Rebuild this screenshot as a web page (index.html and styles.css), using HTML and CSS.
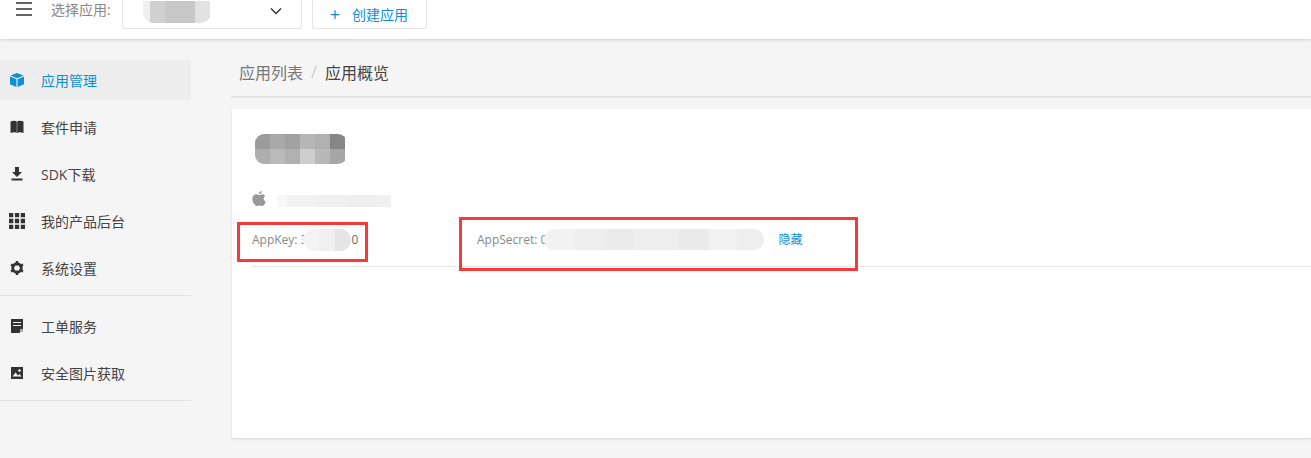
FILE: index.html
```html
<!DOCTYPE html>
<html>
<head>
    <meta charset="utf-8">
    <link rel="stylesheet" href="styles.css">
</head>
<body>
    <div id="topBar">
        <svg class="menuIcon" width="18" height="16" viewBox="0 0 18 16"><path d="M1 2h16M1 8h16M1 14h16" stroke="#333" stroke-width="1.4" fill="none"/></svg>
        <span class="selectLabel">选择应用:</span>
        <div class="appSelect">
            <div class="blur selectBlur">
                <i style="width:7px;background:#f0f0f0"></i><i style="width:15px;background:#d0d0d0"></i><i style="width:30px;background:#c8c8c8"></i><i style="width:15px;background:#e2e2e2"></i>
            </div>
            <svg class="chevron" width="12" height="8" viewBox="0 0 12 8"><path d="M1 1.5l5 5 5-5" stroke="#333" stroke-width="1.4" fill="none"/></svg>
        </div>
        <div class="createBtn"><span class="plus">+</span><span>创建应用</span></div>
    </div>

    <div id="page">
        <div id="sideNav">
            <div class="navItem active">
                <svg class="navIcon" viewBox="0 0 14 14"><path d="M7 0l6.5 2.6L7 5.2.5 2.6zM0 3.6l6.4 2.6V14L0 11.2zM14 3.6L7.6 6.2V14l6.4-2.8z" fill="#0b8fd6"/></svg>
                <span>应用管理</span>
            </div>
            <div class="navItem">
                <svg class="navIcon" viewBox="0 0 14 14"><path d="M0.500 1.500C3 .5 5.800.5 6.800 1.500V13C5.800 12 3 12 .5 13zM13.500 1.500C11 .5 8.200.5 7.200 1.500V13C8.200 12 11 12 13.500 13z" fill="#333"/></svg>
                <span>套件申请</span>
            </div>
            <div class="navItem">
                <svg class="navIcon" viewBox="0 0 14 14"><path d="M5 0h4v5h3L7 10 2 5h3zM1.500 11.500h11v2h-11z" fill="#333"/></svg>
                <span>SDK下载</span>
            </div>
            <div class="navItem">
                <svg class="navIcon gridIcon" viewBox="0 0 15 15"><path d="M0 0h4v4H0zM5.500 0h4v4h-4zM11 0h4v4h-4zM0 5.500h4v4H0zM5.500 5.500h4v4h-4zM11 5.500h4v4h-4zM0 11h4v4H0zM5.500 11h4v4h-4zM11 11h4v4h-4z" fill="#333"/></svg>
                <span>我的产品后台</span>
            </div>
            <div class="navItem">
                <svg class="navIcon" viewBox="0 0 14 14"><circle cx="7" cy="7" r="4.400" fill="none" stroke="#333" stroke-width="2.600"/><path d="M7 7L7 0M7 7L13 3.500M7 7L13 10.500M7 7L7 14M7 7L1 10.500M7 7L1 3.500" stroke="#333" stroke-width="2.400"/><circle cx="7" cy="7" r="2.600" fill="#f5f5f5"/></svg>
                <span>系统设置</span>
            </div>
            <div class="navDivider"></div>
            <div class="navItem">
                <svg class="navIcon" viewBox="0 0 14 14"><path d="M1 0h12v9.500L9.500 14H1z" fill="#333"/><path d="M3 3.500h8M3 6.500h8" stroke="#f5f5f5" stroke-width="1"/><path d="M10 10h3v3h-3z" fill="#aaa"/></svg>
                <span>工单服务</span>
            </div>
            <div class="navItem">
                <svg class="navIcon" viewBox="0 0 14 14"><path d="M1 1h12v12H1z" fill="#333"/><path d="M2.500 10.500l3-4 2.500 3 1.500-1.500 2 2.500z" fill="#f5f5f5"/><circle cx="9.500" cy="4.500" r="1.300" fill="#f5f5f5"/></svg>
                <span>安全图片获取</span>
            </div>
            <div class="navDivider"></div>
        </div>

        <div id="content">
            <div class="breadcrumb">
                <span class="crumb">应用列表</span>
                <span class="crumbSep">/</span>
                <span class="crumbNow">应用概览</span>
            </div>
            <div class="card">
                <div class="blur titleBlur">
                    <div class="blurRow">
                        <i style="background:#9b9b9b"></i><i style="background:#a9a9a9"></i><i style="background:#a2a2a2"></i><i style="background:#b6b6b6"></i><i style="background:#b0b0b0"></i><i style="background:#868686"></i>
                    </div>
                    <div class="blurRow">
                        <i style="background:#aeaeae"></i><i style="background:#bababa"></i><i style="background:#b0b0b0"></i><i style="background:#cecece"></i><i style="background:#b8b8b8"></i><i style="background:#a6a6a6"></i>
                    </div>
                </div>
                <div class="platformRow">
                    <svg width="14" height="16" viewBox="0 0 14 16"><path d="M7.200 4.100C8 4.100 9 3.300 10.300 3.300c1 0 2.200.5 2.900 1.600-2.400 1.400-2 4.700.6 5.800-.6 1.700-2 4.300-3.500 4.300-.9 0-1.400-.6-2.600-.6s-1.700.6-2.600.6C3.100 15 .3 11.500.3 8.100.3 5 2.200 3.300 4.100 3.300c1.300 0 2.300.8 3.100.8zM9.800 0c.1 1.800-1.500 3.300-3 3.100C6.700 1.500 8.300.1 9.800 0z" fill="#999"/></svg>
                    <div class="blur bundleBlur">
                        <i style="width:10px;background:#f8f8f8"></i><i style="width:30px;background:#f2f2f2"></i><i style="width:30px;background:#f0f0f0"></i><i style="width:30px;background:#eeeeee"></i><i style="width:14px;background:#f1f1f1"></i>
                    </div>
                </div>
                <div class="keyRow">
                    <div class="keyItem keyItemFirst">
                        <span>AppKey: 3</span>
                        <div class="blur keyBlur">
                            <i style="width:16px;background:#f4f4f4"></i><i style="width:16px;background:#f0f0f0"></i><i style="width:16px;background:#e5e5e5"></i>
                        </div>
                        <span class="keyTail">0</span>
                    </div>
                    <div class="keyItem">
                        <span>AppSecret: 0</span>
                        <div class="blur secretBlur">
                            <i style="width:30px;background:#f2f2f2"></i><i style="width:30px;background:#eeeeee"></i><i style="width:30px;background:#ebebeb"></i><i style="width:45px;background:#eeeeee"></i><i style="width:30px;background:#eaeaea"></i><i style="width:30px;background:#f1f1f1"></i><i style="width:30px;background:#eeeeee"></i>
                        </div>
                        <a class="hideLink">隐藏</a>
                    </div>
                </div>
            </div>
        </div>
    </div>

    <div class="redBox redBoxKey"></div>
    <div class="redBox redBoxSecret"></div>
</body>
</html>
```

FILE: styles.css
```css
* {
    box-sizing: border-box;
}
html, body {
    margin: 0;
    height: 458px;
    overflow: hidden;
}
body {
    background-color: #F5F5F5;
    color: #333;
    font-family: "Open Sans", "Noto Sans CJK SC", sans-serif;
    font-size: 14px;
}
#topBar {
    height: 39px;
    background-color: #fff;
    box-shadow: 0 1px 3px rgba(0, 0, 0, 0.15);
    display: flex;
    align-items: flex-start;
    padding-left: 15px;
}
.menuIcon {
    margin-top: 1px;
}
.selectLabel {
    margin: 1px 0 0 18px;
    color: #888;
    line-height: 18px;
}
.appSelect {
    width: 180px;
    height: 29px;
    margin-left: 11px;
    border: 1px solid #e4e4e4;
    border-top: none;
    border-radius: 0 0 3px 3px;
    display: flex;
    justify-content: space-between;
    align-items: flex-start;
    padding: 0 19px 0 20px;
}
.chevron {
    margin-top: 7px;
}
.createBtn {
    width: 115px;
    height: 29px;
    margin-left: 10px;
    border: 1px solid #e4e4e4;
    border-top: none;
    border-radius: 0 0 3px 3px;
    color: #0b8fd6;
    display: flex;
    align-items: center;
    padding-left: 17px;
    gap: 12px;
}
.plus {
    font-size: 18px;
    line-height: 18px;
}
.blur {
    display: flex;
    overflow: hidden;
    filter: blur(0.4px);
}
.blur i {
    display: block;
}
.selectBlur {
    width: 68px;
    height: 22px;
    margin-top: 1px;
    border-radius: 0 0 10px 10px;
}
#page {
    display: flex;
    height: 419px;
}
#sideNav {
    width: 191px;
    padding-top: 21px;
    flex-shrink: 0;
}
.navItem {
    height: 40px;
    margin-bottom: 7px;
    display: flex;
    align-items: center;
    padding-left: 10px;
    color: #444;
}
.navItem.active {
    background-color: #EDEDED;
    color: #0b8fd6;
}
.navIcon {
    width: 14px;
    height: 14px;
    margin: -1px 17px 0 0;
}
.gridIcon {
    width: 16px;
    height: 16px;
    margin: -1px 16px 0 -1px;
}
.navDivider {
    height: 1px;
    background-color: #e2e2e2;
    margin: 6px 0 10px;
}
.navDivider:last-child {
    margin-top: 7px;
}
#content {
    margin-left: 40px;
    flex: 1;
    min-width: 0;
}
.breadcrumb {
    height: 59px;
    border-bottom: 2px solid #e4e4e4;
    display: flex;
    align-items: center;
    font-size: 16px;
    gap: 8px;
    padding: 9px 0 0 8px;
}
.crumb {
    color: #777;
}
.crumbSep {
    color: #ccc;
}
.crumbNow {
    color: #444;
}
.card {
    margin: 11px 0 0 1px;
    height: 329px;
    background-color: #fff;
    box-shadow: 0 1px 2px rgba(0, 0, 0, 0.15);
    padding: 25px 0 0 20px;
}
.titleBlur {
    flex-direction: column;
    width: 92px;
    height: 30px;
    margin-left: 3px;
    border-radius: 9px;
}
.blurRow {
    display: flex;
    height: 15px;
}
.blurRow i {
    width: 15px;
}
.platformRow {
    display: flex;
    align-items: center;
    margin-top: 27px;
    gap: 11px;
}
.bundleBlur {
    width: 114px;
    height: 12px;
    margin-top: 4px;
}
.bundleBlur i, .keyBlur i, .secretBlur i {
    flex-shrink: 0;
}
.keyRow {
    display: flex;
    align-items: flex-start;
    margin-top: 25px;
    height: 35px;
    border-bottom: 1px solid #e4e4e4;
    font-size: 12px;
    color: #888;
}
.keyItem {
    display: flex;
    align-items: flex-start;
    line-height: 16px;
}
.keyItemFirst {
    width: 225px;
}
.keyBlur {
    width: 48px;
    height: 22px;
    margin: -3px 1px 0 -5px;
    border-radius: 11px;
}
.keyTail {
    color: #666;
}
.secretBlur {
    width: 220px;
    height: 21px;
    margin: -3px 0 0 -3px;
    border-radius: 10px;
}
.hideLink {
    color: #0b8fd6;
    margin-left: 14px;
}
.redBox {
    position: absolute;
    border: 3px solid #F53A3A;
}
.redBoxKey {
    left: 237px;
    top: 222px;
    width: 131px;
    height: 40px;
}
.redBoxSecret {
    left: 459px;
    top: 217px;
    width: 399px;
    height: 54px;
}
```
